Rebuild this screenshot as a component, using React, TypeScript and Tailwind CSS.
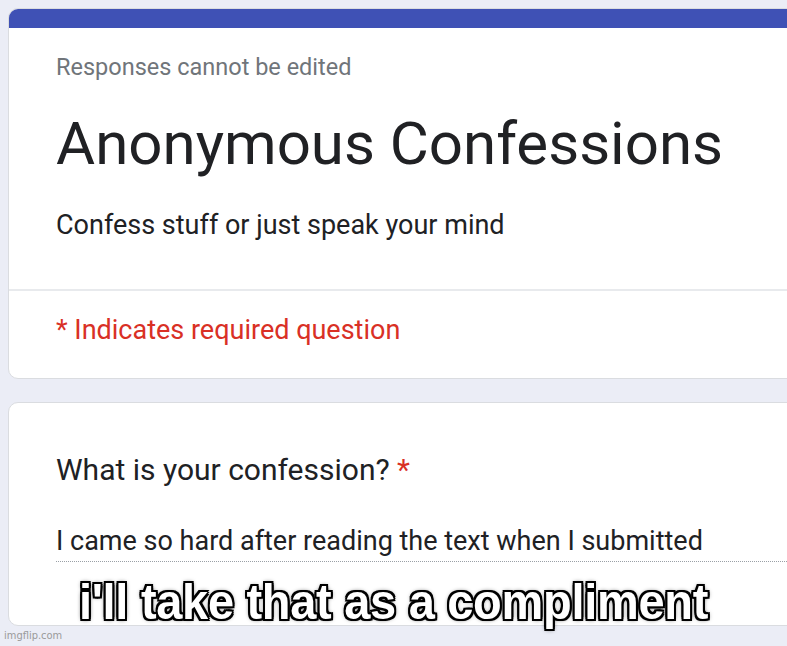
import React from 'react';

const App: React.FC = () => {
  return (
    <div
      className="w-[787px] h-[646px] overflow-hidden bg-[#ebedf6] relative"
      style={{ fontFamily: 'Roboto, "Liberation Sans", sans-serif' }}
    >
      <div className="pt-2 pl-2">
        {/* header card */}
        <div className="w-[820px] rounded-tl-[10px] rounded-bl-[10px] overflow-hidden bg-white border border-[#dadce0]">
          <div className="h-[19px] bg-[#3f51b5]" />
          <div className="pl-[47px] pt-[25px]">
            <p className="text-[23.5px] leading-[28px] text-[#70757a]">Responses cannot be edited</p>
            <h1 className="mt-[29px] text-[60px] leading-[68px] text-[#202124]">Anonymous Confessions</h1>
            <p className="mt-[30px] text-[27px] leading-[34px] text-[#202124]">Confess stuff or just speak your mind</p>
          </div>
          <div className="mt-[47px] border-t-2 border-[#e8eaed]" />
          <div className="pl-[47px] pt-[22px] pb-[31px]">
            <p className="text-[27px] leading-[34px] text-[#d93025]">* Indicates required question</p>
          </div>
        </div>

        {/* question card */}
        <div className="mt-[23px] w-[820px] h-[224px] rounded-l-[10px] bg-white border border-[#dadce0] pl-[47px] pt-[49px]">
          <p className="text-[30px] leading-[36px] text-[#202124]">
            What is your confession? <span className="text-[#d93025]">*</span>
          </p>
          <div className="mt-[36px] border-b border-dotted border-[#9aa0a6] pb-[3px]">
            <p className="text-[27px] leading-[34px] text-[#202124]">
              I came so hard after reading the text when I submitted
            </p>
          </div>
        </div>
      </div>

      {/* meme caption overlay */}
      <div
        className="absolute left-0 right-0 top-[575px] text-center text-white text-[47px] leading-[54px] font-bold tracking-[-0.3px] scale-y-[1.08]"
        style={{
          fontFamily: '"Liberation Sans", Arial, sans-serif',
          textShadow:
            '2px 2px 0 #000, -2px -2px 0 #000, 2px -2px 0 #000, -2px 2px 0 #000, 0 2px 0 #000, 2px 0 0 #000, 0 -2px 0 #000, -2px 0 0 #000, 0 0 5px #000',
        }}
      >
        i'll take that as a compliment
      </div>

      <div
        className="absolute left-[4px] bottom-[2px] text-[11px] text-[#9a9a9a]"
        style={{ fontFamily: '"DejaVu Sans Condensed", "Liberation Sans", sans-serif' }}
      >
        imgflip.com
      </div>
    </div>
  );
};

export default App;
